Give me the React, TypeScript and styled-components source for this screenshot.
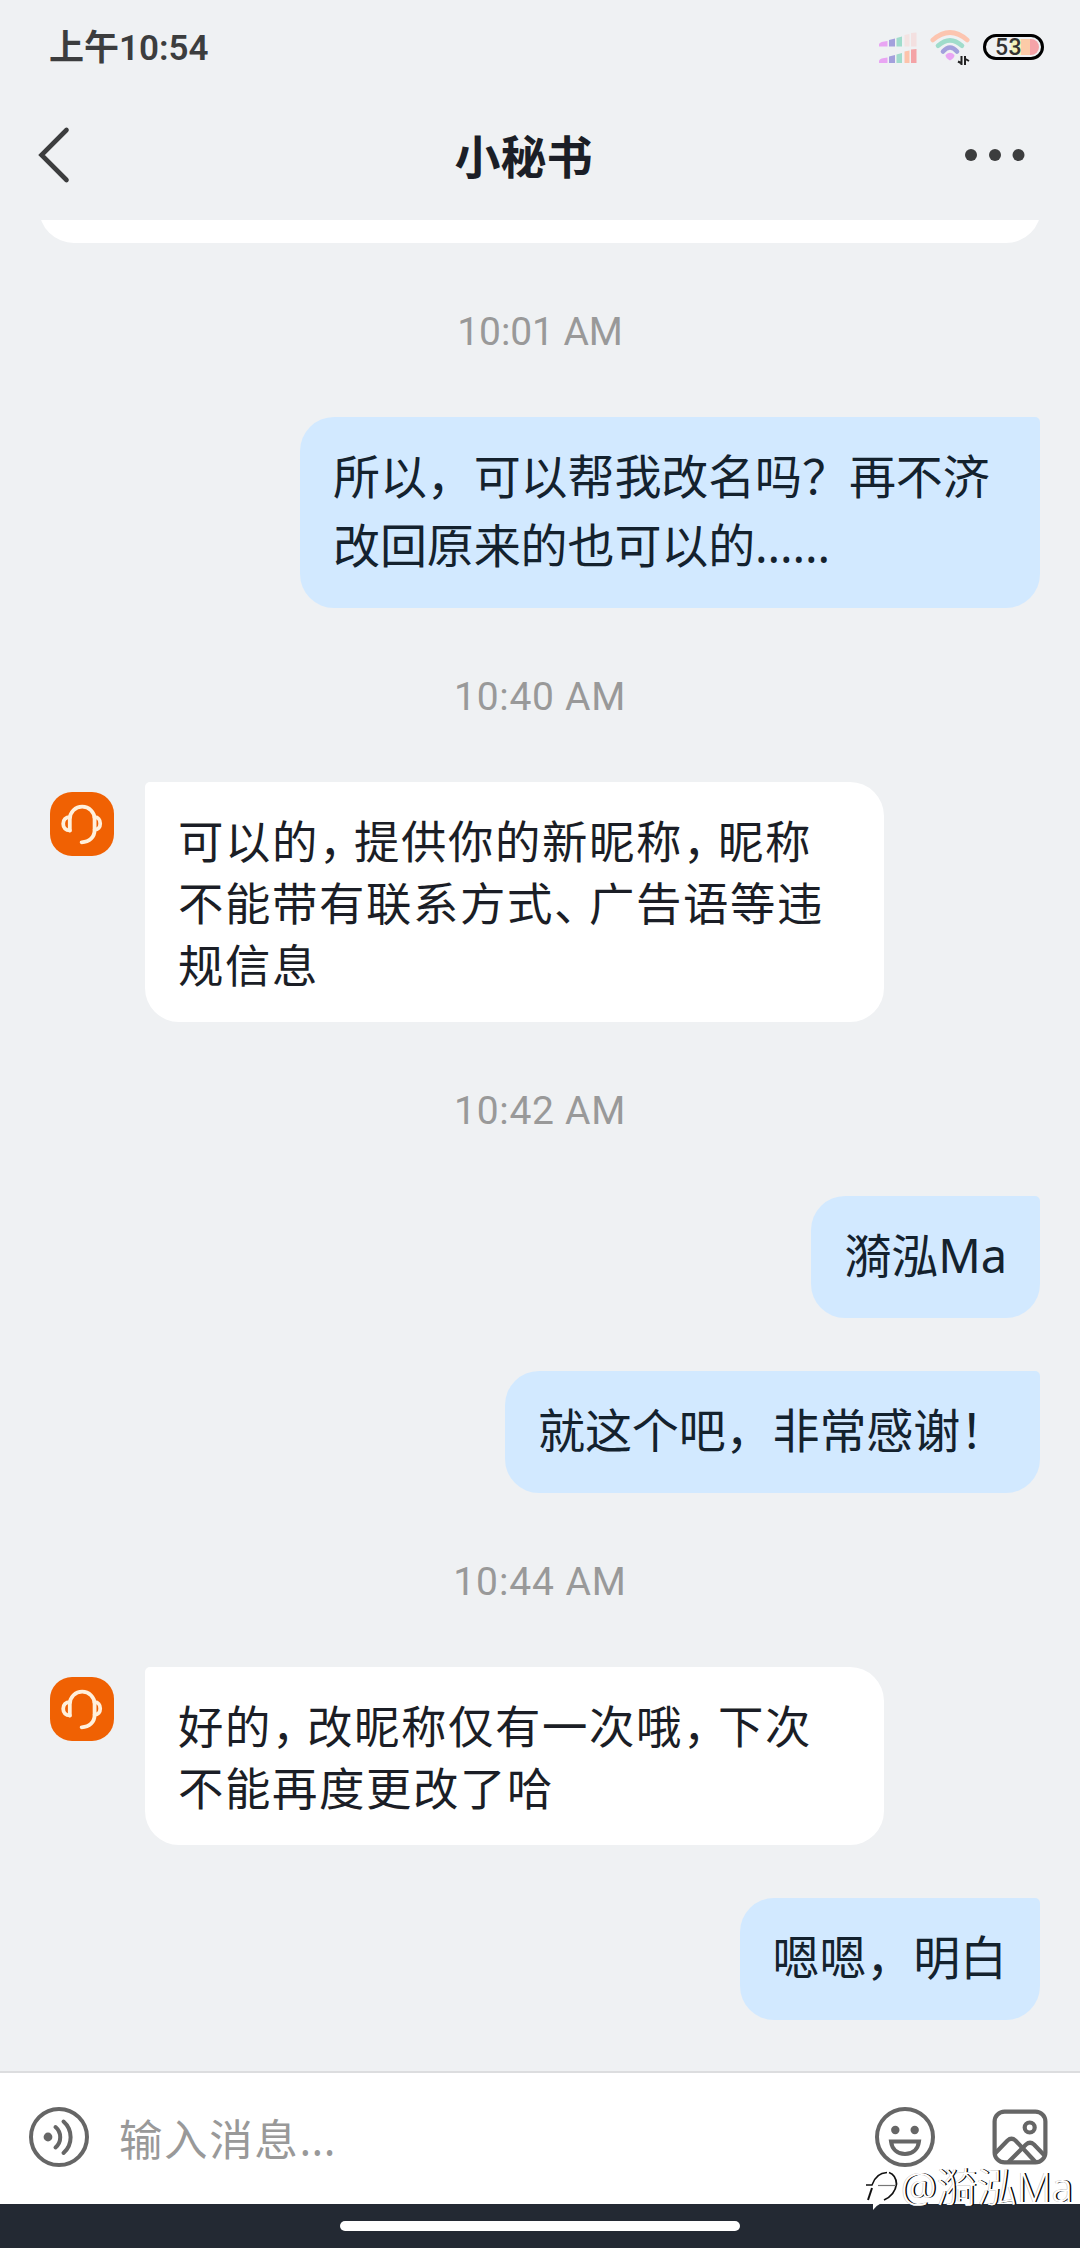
import React from "react";
import styled, { createGlobalStyle } from "styled-components";

const Global = createGlobalStyle`
  * { box-sizing: border-box; }
  body { margin: 0; background: #eff1f3; }
`;

const CJK = `"Noto Sans CJK SC", sans-serif`;

const Screen = styled.main`
  position: relative;
  display: flex;
  flex-direction: column;
  width: 1080px;
  height: 2248px;
  overflow: hidden;
  background: #eff1f3;
  font-family: Roboto, ${CJK};
`;

const StatusBar = styled.header`
  display: flex;
  align-items: center;
  justify-content: space-between;
  height: 96px;
  padding: 0 36px 0 49px;
`;

const Clock = styled.span`
  padding-top: 2px;
  color: #3c3d3e;
  font-size: 35px;
  font-weight: 600;
  line-height: 40px;
`;

const StatusIcons = styled.div`
  display: flex;
  align-items: center;
`;

const Signal = styled.svg`
  display: block;
  margin-right: 13px;
`;

const Wifi = styled.svg`
  display: block;
  margin-right: 13px;
`;

const Battery = styled.div`
  width: 61px;
  height: 26px;
  margin-top: -2px;
  padding: 2px;
  border: 3px solid #000;
  border-radius: 13px;
`;

const Charge = styled.div`
  height: 16px;
  padding-left: 7px;
  border-radius: 8px;
  background: linear-gradient(90deg, transparent 46%, #f3f3b8 46% 64%, #fccba8 64% 82%, #f5a3a8 82%);
  color: #333;
  font-size: 23px;
  font-weight: 500;
  line-height: 17px;
  letter-spacing: 0.5px;
`;

const TitleBar = styled.div`
  display: flex;
  align-items: center;
  justify-content: space-between;
  height: 124px;
  padding: 0 55px 6px 38px;
`;

const Title = styled.h1`
  margin: 0 0 0 12px;
  padding-bottom: 3px;
  color: #1b1e26;
  font-family: ${CJK};
  font-size: 46px;
  font-weight: 700;
  line-height: 60px;
`;

const IconButton = styled.button`
  display: flex;
  padding: 0;
  border: 0;
  background: none;
`;

const Conversation = styled.section`
  display: flex;
  flex-direction: column;
  flex: 1;
  min-height: 0;
`;

const CutCard = styled.div`
  height: 23px;
  margin: 0 39px;
  overflow: hidden;

  &::before {
    content: "";
    display: block;
    height: 123px;
    margin-top: -100px;
    border-radius: 35px;
    background: #fff;
  }
`;

const TimeStamp = styled.time<{ $spacing?: number }>`
  margin-top: 69px;
  height: 40px;
  color: #999;
  font-size: 39px;
  line-height: 40px;
  letter-spacing: ${(p) => p.$spacing ?? 0.7}px;
  text-align: center;
`;

const Row = styled.div<{ $top: number; $mine?: boolean }>`
  display: flex;
  align-items: flex-start;
  justify-content: ${(p) => (p.$mine ? "flex-end" : "flex-start")};
  margin-top: ${(p) => p.$top}px;
  padding: 0 40px 0 50px;
`;

const Sent = styled.p`
  max-width: 740px;
  margin: 0;
  padding: 25px 33px 28px;
  border-radius: 34px 5px 34px 34px;
  background: #d2e9ff;
  color: #14222e;
  font-family: "Noto Sans", ${CJK};
  font-size: 47px;
  line-height: 69px;
  letter-spacing: -0.1px;
`;

const Received = styled.p`
  width: 739px;
  margin: 0 0 0 31px;
  padding: 26px 33px 28px;
  border-radius: 5px 34px 34px 34px;
  background: #fff;
  color: #1b1e26;
  font-family: ${CJK};
  font-size: 45.4px;
  line-height: 62px;
  letter-spacing: 1.6px;
`;

const Stop = styled.span`
  font-feature-settings: "halt";
  letter-spacing: 12.3px;
`;

const Avatar = styled.div`
  display: flex;
  align-items: center;
  justify-content: center;
  width: 64px;
  height: 64px;
  margin-top: 10px;
  border-radius: 22px;
  background: #f06103;
`;

const Composer = styled.footer`
  display: flex;
  align-items: center;
  height: 133px;
  padding: 0 32px 3px 29px;
  border-top: 2px solid #dcdddf;
  background: #fff;
`;

const Placeholder = styled.span`
  flex: 1;
  margin-left: 30px;
  padding-top: 3px;
  color: #999;
  font-family: "Noto Sans", ${CJK};
  font-size: 43.5px;
  line-height: 60px;
  letter-spacing: 1.6px;
`;

const Dots = styled.span`
  letter-spacing: 0.5px;
`;

const GalleryButton = styled(IconButton)`
  margin-left: 57px;
`;

const NavBar = styled.nav`
  display: flex;
  justify-content: center;
  height: 44px;
  padding-top: 17px;
  background: #232933;
`;

const Handle = styled.div`
  width: 400px;
  height: 10px;
  border-radius: 5px;
  background: #fff;
`;

const Watermark = styled.div`
  position: absolute;
  right: 7px;
  bottom: 34px;
  display: flex;
  align-items: center;
  gap: 2px;
  color: #fff;
  font-family: "Noto Sans", ${CJK};
  font-size: 40px;
  font-weight: 300;
  line-height: 54px;
  white-space: nowrap;
  text-shadow: 1.5px 0 0 #000, -0.5px -0.5px 0 #bbb;
`;

const MarkLogo = styled.svg`
  display: block;
  margin-top: 8px;
`;

const condenseStops = (text: string) =>
  text.split(/([，、])/).map((part, i) => (/[，、]/.test(part) ? <Stop key={i}>{part}</Stop> : part));

const Headset = () => (
  <Avatar>
    <svg width="64" height="64" viewBox="0 0 64 64" fill="none" stroke="#fff0dc" strokeWidth="3.8" strokeLinecap="round">
      <path d="M19.8 38.5V27a12.400 12.400 0 0 1 24.800 0V38c0 7-5 12-13 12.300" />
      <path d="M19.800 25.200c-4 0-6.600 2.500-6.600 6.600s2.600 6.600 6.600 6.600" />
      <path d="M44.600 25.200c3.500 0 5.600 2.500 5.600 6.300s-2.100 6.300-5.600 6.300" />
    </svg>
  </Avatar>
);

const Bars = ({ y, dim }: { y: number; dim?: boolean }) => (
  <g transform={`translate(0 ${y})`}>
    <path d="M0 14V11.500Q1 9 8.500 8.500V14Z" fill="#e9a5f3" />
    <path d="M10 14V7.500l6-1.500V14Z" fill="#a3a0dc" />
    <path d="M17.500 14V5.500l5.500-1.500V14Z" fill="#a0dccb" />
    <path d="M25.500 14V2.500l5-1V14Z" fill={dim ? "#f3e3e2" : "#fdc3ab"} />
    <path d="M32 14V0.500l5.500-.5V14Z" fill={dim ? "#f3e0e0" : "#f4a3a6"} />
  </g>
);

export default function App() {
  return (
    <Screen>
      <Global />
      <StatusBar>
        <Clock>上午10:54</Clock>
        <StatusIcons>
          <Signal width="38" height="32" viewBox="0 0 38 32">
            <Bars y={0.5} dim />
            <Bars y={17} />
          </Signal>
          <Wifi width="40" height="36" viewBox="0 0 40 36" fill="none" strokeWidth="4.600" strokeLinecap="round">
            <path d="M2.800 10Q20-5 37.200 10" stroke="#fcc5b0" />
            <path d="M8 15.800Q20 5 32 15.800" stroke="#a0dccb" />
            <path d="M13 21.500Q20 13.500 27 21.500" stroke="#a3a0dc" />
            <path d="M15.500 25Q20 20.500 24.500 25Q24.500 28 20 30.500Q15.500 28 15.500 25Z" fill="#e9a5f3" />
            <path d="M31.500 26V35M28 31.500L31 33M35 35V26M35.500 29L39 31" stroke="#222" strokeWidth="2" strokeLinecap="butt" />
          </Wifi>
          <Battery>
            <Charge>53</Charge>
          </Battery>
        </StatusIcons>
      </StatusBar>
      <TitleBar>
        <IconButton aria-label="返回">
          <svg width="32" height="58" viewBox="0 0 32 58" fill="none" stroke="#3c3d3e" strokeWidth="4.600" strokeLinecap="round">
            <path d="M28.500 4L3.500 29L28.500 54" />
          </svg>
        </IconButton>
        <Title>小秘书</Title>
        <IconButton aria-label="更多">
          <svg width="60" height="12" viewBox="0 0 60 12" fill="#3c3d3e">
            <circle cx="6" cy="6" r="6" />
            <circle cx="30" cy="6" r="6" />
            <circle cx="53.500" cy="6" r="6" />
          </svg>
        </IconButton>
      </TitleBar>
      <Conversation>
        <CutCard />
        <TimeStamp $spacing={-0.1}>10:01 AM</TimeStamp>
        <Row $top={65} $mine>
          <Sent>所以，可以帮我改名吗？再不济改回原来的也可以的......</Sent>
        </Row>
        <TimeStamp>10:40 AM</TimeStamp>
        <Row $top={65}>
          <Headset />
          <Received>{condenseStops("可以的，提供你的新昵称，昵称不能带有联系方式、广告语等违规信息")}</Received>
        </Row>
        <TimeStamp>10:42 AM</TimeStamp>
        <Row $top={65} $mine>
          <Sent>漪泓Ma</Sent>
        </Row>
        <Row $top={53} $mine>
          <Sent>就这个吧，非常感谢！</Sent>
        </Row>
        <TimeStamp $spacing={0.9}>10:44 AM</TimeStamp>
        <Row $top={65}>
          <Headset />
          <Received>{condenseStops("好的，改昵称仅有一次哦，下次不能再度更改了哈")}</Received>
        </Row>
        <Row $top={53} $mine>
          <Sent>嗯嗯，明白</Sent>
        </Row>
      </Conversation>
      <Composer>
        <IconButton aria-label="语音">
          <svg width="60" height="60" viewBox="0 0 60 60" fill="none" stroke="#666" strokeWidth="4" strokeLinecap="round">
            <circle cx="30" cy="30" r="28" />
            <circle cx="19" cy="30" r="4.400" fill="#666" stroke="none" />
            <path d="M26.500 20a13.500 13.500 0 0 1 0 20.500M34.500 14.500a21 21 0 0 1 0 31.500" />
          </svg>
        </IconButton>
        <Placeholder>
          输入消息<Dots>...</Dots>
        </Placeholder>
        <IconButton aria-label="表情">
          <svg width="60" height="60" viewBox="0 0 60 60" fill="none" stroke="#666" strokeWidth="4">
            <circle cx="30" cy="30" r="28" />
            <circle cx="20.300" cy="23" r="4.200" fill="#666" stroke="none" />
            <circle cx="39.700" cy="23" r="4.200" fill="#666" stroke="none" />
            <path d="M16 34.500H44C43 42 38 47 30 47S17 42 16 34.500Z" />
          </svg>
        </IconButton>
        <GalleryButton aria-label="图片">
          <svg width="56" height="56" viewBox="0 0 56 56" fill="none" stroke="#666" strokeWidth="4.200">
            <rect x="2.600" y="2.600" width="50.800" height="50.800" rx="10" />
            <circle cx="37.700" cy="18.500" r="5" />
            <path d="M3 44.500L15.500 31.500Q19.500 28 23.500 31.500L43.500 53" />
            <path d="M16.500 53L34 35.500Q38 32 42 35.500L53 47" />
          </svg>
        </GalleryButton>
      </Composer>
      <NavBar>
        <Handle />
      </NavBar>
      <Watermark>
        <MarkLogo width="34" height="42" viewBox="0 0 34 42" fill="none">
          <path d="M6 13Q11 2 22 2Q32 4 32 15Q30 28 18 32Q12 35 8 40L8 31Q4 28 6 13Z" fill="#fff" />
          <path d="M1 15H7Q11 3 22 2.500" stroke="#111" strokeWidth="1.500" />
          <path d="M24 2.500Q31 5 31.500 14Q30 25 19 30" stroke="#111" strokeWidth="1.800" />
          <path d="M7 18L3 30" stroke="#111" strokeWidth="2" />
          <path d="M13 15.500H31" stroke="#777" strokeWidth="1.200" />
        </MarkLogo>
        <span>@漪泓Ma</span>
      </Watermark>
    </Screen>
  );
}
